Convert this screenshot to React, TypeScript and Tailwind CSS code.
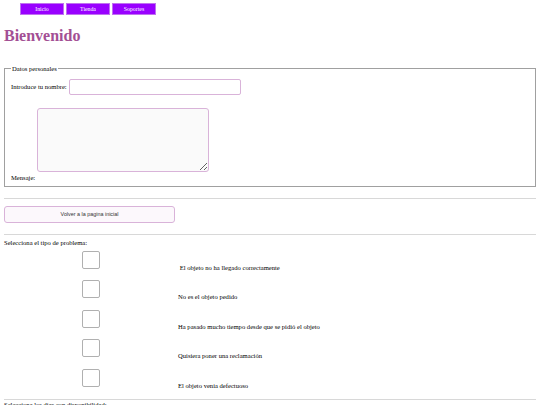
import React from 'react';

const problemas = [
  ' El objeto no ha llegado correctamente',
  'No es el objeto pedido',
  'Ha pasado mucho tiempo desde que se pidió el objeto',
  'Quisiera poner una reclamación',
  'El objeto venia defectuoso',
];

const App = () => {
  return (
    <div className="min-h-screen bg-white text-black text-[6.6px] leading-[1.2]" style={{ fontFamily: '"Liberation Serif", serif' }}>
      {/* Menu */}
      <nav className="flex gap-[2px] pl-[20px] pt-[3px]">
        {['Inicio', 'Tienda', 'Soportes'].map((item) => (
          <a
            key={item}
            className="flex h-[12px] w-[44px] items-center justify-center border border-[#c070f0] bg-[#9900ff] text-[5.8px] text-white"
          >
            {item}
          </a>
        ))}
      </nav>

      <h1 className="ml-[4px] mt-[11px] text-[16px] font-bold leading-[20px] text-[#a34f94]">Bienvenido</h1>

      <form className="mx-[4px] mt-[19px]">
        <fieldset className="border border-[#a0a0a0] px-[6px] pb-[1px]">
          <legend className="px-[1px]">Datos personales</legend>
          <div className="mt-[6px] flex items-center">
            <label>Introduce tu nombre:</label>
            <input
              type="text"
              className="ml-[2px] h-[16px] w-[172px] rounded-[2px] border border-[#d9b3d9] bg-white outline-none"
            />
          </div>
          <div className="mt-[13px] pl-[26px]">
            <textarea className="block h-[64px] w-[172px] rounded-[3px] border border-[#d9b3d9] bg-[#fafafa] outline-none" />
          </div>
          <label className="mt-[2px] block h-[11px]">Mensaje:</label>
        </fieldset>
      </form>

      <hr className="mx-[4px] mt-[11px] border-t border-[#d8d8d8]" />

      <button
        type="button"
        className="ml-[4px] mt-[7px] block h-[17px] w-[171px] rounded-[3px] border border-[#d9b3d9] bg-[#fcf8fc] text-[5.4px] text-[#333]"
        style={{ fontFamily: '"Liberation Sans", Arial, sans-serif' }}
      >
        Volver a la pagina inicial
      </button>

      <hr className="mx-[4px] mt-[11px] border-t border-[#d8d8d8]" />

      <p className="ml-[4px] mt-[4px]">Selecciona el tipo de problema:</p>

      <div className="mt-[4px] flex flex-col gap-[11.5px]">
        {problemas.map((p) => (
          <div key={p} className="flex items-end">
            <input
              type="checkbox"
              className="ml-[82px] h-[18px] w-[18px] appearance-none rounded-[2px] border border-[#b0b0b0] bg-white"
            />
            <label className="ml-[78px] -mb-[3px] whitespace-pre leading-[8px]">{p}</label>
          </div>
        ))}
      </div>

      <hr className="mx-[4px] mt-[12px] border-t border-[#d8d8d8]" />
      <p className="ml-[4px] mt-[1px]">Selecciona los dias con disponibilidad:</p>
    </div>
  );
};

export default App;
